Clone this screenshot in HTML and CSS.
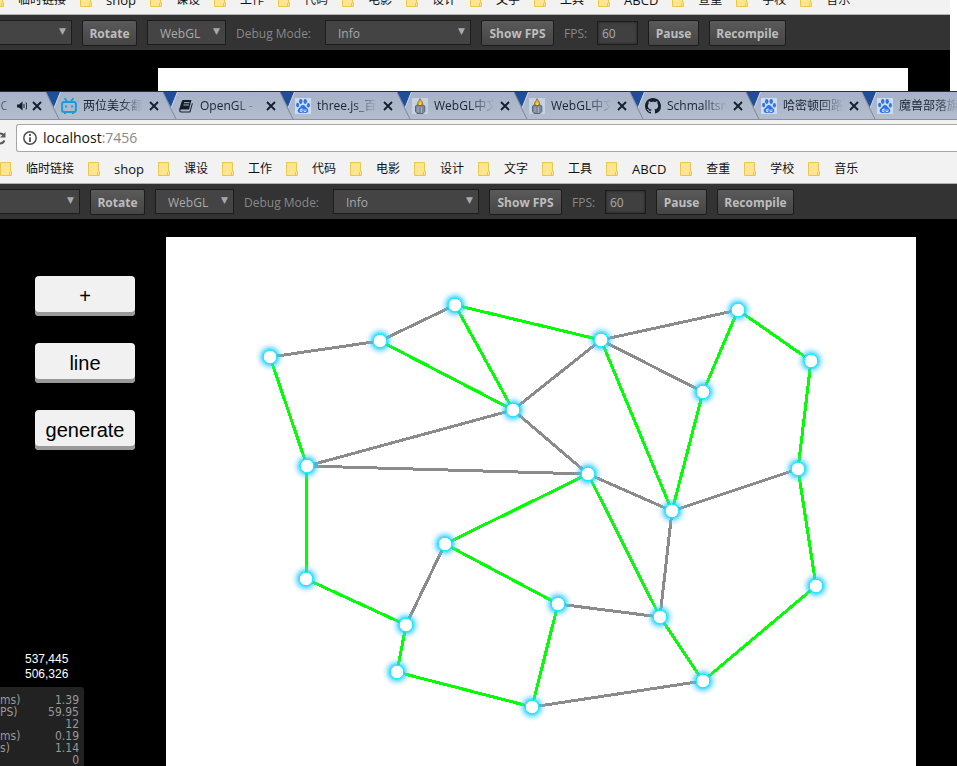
FILE: index.html
```
<!DOCTYPE html>
<html lang="zh">
<head>
<meta charset="utf-8">
<title>localhost:7456</title>
<link rel="stylesheet" href="styles.css">
</head>
<body>
<svg class="defs" aria-hidden="true">
  <symbol id="edge" viewBox="0 0 15 27"><path class="wedge" d="M0 0H14L8 15.500Z"/><path class="edge-light" d="M14.500 0L8 16"/><path class="edge-dark" d="M0 0L7.500 16L13 27"/></symbol>
  <symbol id="folder" viewBox="0 0 12 14"><path d="M.5.500H10.500V9.500H11.500V13.500H.5Z" fill="#ffe593" stroke="#edc64a"/><path d="M9.500 13V10" stroke="#edc64a"/></symbol>
  <symbol id="close" viewBox="0 0 10 10"><path d="M1 1L9 9M9 1L1 9" stroke="#131d2b" stroke-width="1.800"/></symbol>
  <symbol id="paw" viewBox="0 0 16 16"><rect width="16" height="16" fill="#cfdcf0"/><g fill="#2b74e8"><ellipse cx="5.700" cy="3.500" rx="1.700" ry="2.400"/><ellipse cx="10.200" cy="3.500" rx="1.700" ry="2.400"/><ellipse cx="2.600" cy="7" rx="1.500" ry="2.200"/><ellipse cx="13.400" cy="7.200" rx="1.500" ry="2.200"/><path d="M8 7C10 7 10.500 9 12 10.300C14.500 12.500 13 15.300 10.500 15C8.500 14.700 7.500 14.700 5.500 15C3 15.300 1.500 12.500 4 10.300C5.500 9 6 7 8 7Z"/></g><path d="M7 10.200V13.500H5.400V11.500H7M9 11.300V13.500H11V11.300" fill="none" stroke="#dce7f8" stroke-width=".9"/></symbol>
  <symbol id="lamp" viewBox="0 0 16 16"><rect width="16" height="16" fill="#c5d2e4"/><path d="M3.500 8L5 7H11L12.800 8V13.500L11 15.500H5L3.500 13.500Z" fill="#7d899b" stroke="#596577"/><path d="M6 9V14M9.500 9V15" stroke="#a5b0c0"/><path d="M5.500 7C5 4 7.500 3 8 .5C9 3 11.500 4 10.500 7Z" fill="#e7a823" stroke="#8b6231" stroke-width=".7"/><path d="M7 7C7 5 8 5 8.200 3.500C9.200 5 9.500 6 9 7Z" fill="#ffe023"/></symbol>
</svg>

<section class="window back">
  <nav class="bookmarks">
    <a href="#"><svg><use href="#folder"/></svg>临时链接</a>
    <a href="#" class="latin"><svg><use href="#folder"/></svg>shop</a>
    <a href="#"><svg><use href="#folder"/></svg>课设</a>
    <a href="#"><svg><use href="#folder"/></svg>工作</a>
    <a href="#"><svg><use href="#folder"/></svg>代码</a>
    <a href="#"><svg><use href="#folder"/></svg>电影</a>
    <a href="#"><svg><use href="#folder"/></svg>设计</a>
    <a href="#"><svg><use href="#folder"/></svg>文字</a>
    <a href="#"><svg><use href="#folder"/></svg>工具</a>
    <a href="#" class="latin"><svg><use href="#folder"/></svg>ABCD</a>
    <a href="#"><svg><use href="#folder"/></svg>查重</a>
    <a href="#"><svg><use href="#folder"/></svg>学校</a>
    <a href="#"><svg><use href="#folder"/></svg>音乐</a>
  </nav>
  <div class="toolbar">
    <span class="pick device"><select aria-label="Device"><option></option></select></span>
    <button class="rotate">Rotate</button>
    <span class="pick renderer"><select aria-label="Renderer"><option>WebGL</option></select></span>
    <label class="debug" for="debug-back">Debug Mode:</label>
    <span class="pick level"><select id="debug-back"><option>Info</option></select></span>
    <button class="show">Show FPS</button>
    <label class="fps" for="fps-back">FPS:</label>
    <input id="fps-back" value="60">
    <button class="pause">Pause</button>
    <button class="recompile">Recompile</button>
  </div>
  <div class="stage"><div class="side"></div><div class="canvas"></div></div>
</section>

<section class="window front">
  <div class="tabs">
    <div class="tab first"><span class="title">青C</span><svg class="sound" viewBox="0 0 10 10"><path d="M0 3.500H2L5.500.5V9.500L2 6.500H0Z" fill="#131d2b"/><path d="M7 3V7M9 1.500C10 4 10 6 9 8.500" fill="none" stroke="#131d2b"/></svg><button class="close" aria-label="Close"><svg><use href="#close"/></svg></button></div>
    <div class="tab"><svg class="edge"><use href="#edge"/></svg><svg class="icon" viewBox="0 0 16 16"><path d="M4 .8L6 3.300M12 .8L10 3.300" stroke="#179dda" stroke-width="1.800" stroke-linecap="round"/><rect x="1.100" y="4" width="13.800" height="10" rx="2" fill="none" stroke="#179dda" stroke-width="2"/><path d="M5 7.500V9.500M11 7.500V9.500M3 15.500H5M11 15.500H13" stroke="#179dda" stroke-width="1.800"/></svg><span class="title">两位美女翻</span><button class="close" aria-label="Close"><svg><use href="#close"/></svg></button></div>
    <div class="tab"><svg class="edge"><use href="#edge"/></svg><svg class="icon" viewBox="0 0 16 16"><path d="M5 2H13.500L11 11.500H3.500C2 11.500 1.800 13.500 3.500 13.500H11.500L14 5L14.800 5.500L12.300 14.500H3.500C1 14.500 1 12 1.500 10.500L3.500 4Q4 2 5 2Z" fill="#141c28"/><path d="M6 4.700H11.500M5.500 7H11" stroke="#a9b4c7"/></svg><span class="title">OpenGL -</span><button class="close" aria-label="Close"><svg><use href="#close"/></svg></button></div>
    <div class="tab"><svg class="edge"><use href="#edge"/></svg><svg class="icon"><use href="#paw"/></svg><span class="title">three.js_百</span><button class="close" aria-label="Close"><svg><use href="#close"/></svg></button></div>
    <div class="tab"><svg class="edge"><use href="#edge"/></svg><svg class="icon"><use href="#lamp"/></svg><span class="title">WebGL中文</span><button class="close" aria-label="Close"><svg><use href="#close"/></svg></button></div>
    <div class="tab"><svg class="edge"><use href="#edge"/></svg><svg class="icon"><use href="#lamp"/></svg><span class="title">WebGL中文</span><button class="close" aria-label="Close"><svg><use href="#close"/></svg></button></div>
    <div class="tab"><svg class="edge"><use href="#edge"/></svg><svg class="icon" viewBox="0 0 16 16"><path fill="#18202d" d="M8 0C3.580 0 0 3.580 0 8c0 3.540 2.290 6.530 5.470 7.590.4.070.55-.17.55-.38 0-.19-.01-.82-.01-1.490-2.010.37-2.530-.49-2.690-.94-.09-.23-.48-.94-.82-1.130-.28-.15-.68-.52-.01-.53.63-.01 1.080.58 1.230.82.72 1.210 1.870.87 2.330.66.070-.52.28-.87.510-1.070-1.780-.2-3.640-.89-3.640-3.950 0-.87.310-1.590.82-2.150-.08-.2-.36-1.020.08-2.120 0 0 .67-.21 2.200.82.640-.18 1.320-.27 2-.27s1.360.09 2 .27c1.530-1.040 2.200-.82 2.200-.82.440 1.100.16 1.920.08 2.120.51.560.82 1.270.82 2.150 0 3.070-1.870 3.750-3.650 3.950.29.250.54.730.54 1.480 0 1.070-.01 1.930-.01 2.200 0 .21.150.46.550.38A8.010 8.010 0 0 0 16 8c0-4.420-3.580-8-8-8Z"/></svg><span class="title">Schmalltsn</span><button class="close" aria-label="Close"><svg><use href="#close"/></svg></button></div>
    <div class="tab"><svg class="edge"><use href="#edge"/></svg><svg class="icon"><use href="#paw"/></svg><span class="title">哈密顿回路</span><button class="close" aria-label="Close"><svg><use href="#close"/></svg></button></div>
    <div class="tab"><svg class="edge"><use href="#edge"/></svg><svg class="icon"><use href="#paw"/></svg><span class="title">魔兽部落旗</span></div>
  </div>
  <div class="address">
    <svg class="reload" viewBox="0 0 6 16"><path d="M0 3.500Q3 3.500 4 6M0 13.500Q3 13.500 4.500 10.500" fill="none" stroke="#5a5a5a" stroke-width="2"/><path d="M5.500 2V7.500H0Z" fill="#5a5a5a"/></svg>
    <div class="url">
      <svg viewBox="0 0 14 14"><circle cx="7" cy="7" r="6.200" fill="none" stroke="#505050" stroke-width="1.500"/><path d="M7 3V5M7 6.200V11" stroke="#505050" stroke-width="1.800"/></svg>
      <span>localhost<span class="port">:7456</span></span>
    </div>
  </div>
  <nav class="bookmarks">
    <a href="#"><svg><use href="#folder"/></svg>临时链接</a>
    <a href="#" class="latin"><svg><use href="#folder"/></svg>shop</a>
    <a href="#"><svg><use href="#folder"/></svg>课设</a>
    <a href="#"><svg><use href="#folder"/></svg>工作</a>
    <a href="#"><svg><use href="#folder"/></svg>代码</a>
    <a href="#"><svg><use href="#folder"/></svg>电影</a>
    <a href="#"><svg><use href="#folder"/></svg>设计</a>
    <a href="#"><svg><use href="#folder"/></svg>文字</a>
    <a href="#"><svg><use href="#folder"/></svg>工具</a>
    <a href="#" class="latin"><svg><use href="#folder"/></svg>ABCD</a>
    <a href="#"><svg><use href="#folder"/></svg>查重</a>
    <a href="#"><svg><use href="#folder"/></svg>学校</a>
    <a href="#"><svg><use href="#folder"/></svg>音乐</a>
  </nav>
  <div class="toolbar">
    <span class="pick device"><select aria-label="Device"><option></option></select></span>
    <button class="rotate">Rotate</button>
    <span class="pick renderer"><select aria-label="Renderer"><option>WebGL</option></select></span>
    <label class="debug" for="debug">Debug Mode:</label>
    <span class="pick level"><select id="debug"><option>Info</option></select></span>
    <button class="show">Show FPS</button>
    <label class="fps" for="fps">FPS:</label>
    <input id="fps" value="60">
    <button class="pause">Pause</button>
    <button class="recompile">Recompile</button>
  </div>
  <main class="stage">
    <div class="side">
      <div class="actions">
        <button>+</button>
        <button>line</button>
        <button>generate</button>
      </div>
      <div class="coords">537,445<br>506,326</div>
      <table class="stats">
        <tr><th>ms)</th><td>1.39</td></tr>
        <tr><th>PS)</th><td>59.95</td></tr>
        <tr><th></th><td>12</td></tr>
        <tr><th>ms)</th><td>0.19</td></tr>
        <tr><th>s)</th><td>1.14</td></tr>
        <tr><th></th><td>0</td></tr>
      </table>
    </div>
    <div class="canvas">
      <svg class="graph" viewBox="166 237 750 529">
        <defs>
          <radialGradient id="glow"><stop offset=".4" stop-color="#10cfff" stop-opacity=".95"/><stop offset=".55" stop-color="#30ccff" stop-opacity=".65"/><stop offset=".75" stop-color="#5cd4ff" stop-opacity=".28"/><stop offset="1" stop-color="#9ae4ff" stop-opacity="0"/></radialGradient>
          <g id="node"><circle r="15" fill="url(#glow)"/><circle r="6.800" fill="#fff" stroke="#00f0ff"/></g>
        </defs>
        <path class="link" d="M270 357L380 341L455 305M513 410L307 466L588 474L513 410L601 340L738 310M601 340L703 392M588 474L672 511L798 469M672 511L660 617L558 604M445 544L406 625M532 707L703 681"/>
        <path class="route" d="M270 357L307 466L306 579L406 625L397 672L532 707L558 604L445 544L588 474L660 617L703 681L816 586L798 469L811 361L738 310L703 392L672 511L601 340L455 305L513 410L380 341"/>
        <use href="#node" x="270" y="357"/><use href="#node" x="380" y="341"/><use href="#node" x="455" y="305"/><use href="#node" x="601" y="340"/><use href="#node" x="738" y="310"/><use href="#node" x="811" y="361"/><use href="#node" x="703" y="392"/><use href="#node" x="513" y="410"/><use href="#node" x="307" y="466"/><use href="#node" x="588" y="474"/><use href="#node" x="672" y="511"/><use href="#node" x="798" y="469"/><use href="#node" x="445" y="544"/><use href="#node" x="306" y="579"/><use href="#node" x="406" y="625"/><use href="#node" x="397" y="672"/><use href="#node" x="532" y="707"/><use href="#node" x="558" y="604"/><use href="#node" x="660" y="617"/><use href="#node" x="703" y="681"/><use href="#node" x="816" y="586"/>
      </svg>
    </div>
  </main>
</section>
</body>
</html>
```
FILE: styles.css
```
* { box-sizing: border-box; }
body {
  margin: 0;
  height: 100vh;
  display: flex;
  flex-direction: column;
  overflow: hidden;
  background: #fff;
  font: 12px/16px "Open Sans", "Noto Sans CJK SC", sans-serif;
}
button, select, input { font: inherit; margin: 0; }
.defs { display: none; }
.window { display: flex; flex-direction: column; }
.back { flex: none; height: 91px; margin: 0 7px 0 -8px; overflow: hidden; }
.front { flex: 1; min-height: 0; }

.tabs {
  flex: none;
  height: 29px;
  display: flex;
  overflow: hidden;
  border-top: 1px solid #10336e;
  border-bottom: 1px solid #8a909c;
  background: linear-gradient(#a6b2c7, #b3bdce);
}
.tab { flex: 0 0 117px; display: flex; align-items: center; color: #1a2433; }
.tab:nth-child(n+6) { flex-basis: 116px; }
.tab.first { flex-basis: 46px; }
.tab .edge { flex: none; width: 15px; height: 27px; }
.wedge { fill: #1f4e9a; }
.edge-light { stroke: #c9d3e3; }
.edge-dark { fill: none; stroke: #7d8798; }
.tab .icon { flex: none; width: 16px; height: 16px; margin-right: 6px; }
.tab .title {
  flex: none;
  width: 60px;
  overflow: hidden;
  white-space: nowrap;
  -webkit-mask-image: linear-gradient(90deg, #000 60%, transparent);
  mask-image: linear-gradient(90deg, #000 60%, transparent);
}
.tab.first .title { width: 8px; margin-right: 9px; direction: rtl; opacity: .6; }
.sound { width: 10px; height: 10px; margin-right: 5px; }
.close { width: 10px; height: 10px; margin-left: 6px; padding: 0; border: 0; background: none; display: flex; }
.first .close { margin-left: 0; }
.close svg { width: 10px; height: 10px; }

.address { flex: none; display: flex; align-items: center; height: 34px; padding-top: 2px; background: #f2f2f2; }
.reload { width: 6px; height: 16px; margin-right: 10px; }
.url {
  flex: 1;
  height: 28px;
  display: flex;
  align-items: center;
  gap: 6px;
  padding-left: 6px;
  border: 1px solid #a6a6a6;
  border-right: 0;
  border-radius: 3px 0 0 3px;
  background: #fff;
  color: #111;
  font-size: 14px;
}
.url svg { width: 14px; height: 14px; }
.port { color: #888; }

.bookmarks {
  flex: none;
  display: flex;
  align-items: center;
  gap: 14px;
  height: 30px;
  padding-top: 1px;
  border-bottom: 1px solid #b0b4b0;
  background: #f2f2f2;
}
.back .bookmarks { margin-top: -15px; }
.bookmarks a { display: flex; align-items: center; gap: 14px; color: #111; text-decoration: none; white-space: nowrap; }
.bookmarks .latin { font-size: 13px; }
.bookmarks svg { width: 12px; height: 14px; }

.toolbar {
  flex: none;
  display: flex;
  align-items: center;
  gap: 10px;
  height: 35px;
  padding-top: 1px;
  background: #333;
  color: #888;
  white-space: nowrap;
}
.toolbar > * { flex: none; }
.toolbar label { padding-top: 2px; }
.toolbar button {
  height: 26px;
  padding: 2px 0 0;
  border: 1px solid #1c1c1c;
  border-radius: 2px;
  background: linear-gradient(#5a5a5a, #454545);
  color: #bdbdbd;
  font-weight: 700;
}
.pick { position: relative; height: 26px; }
.pick::after { content: "▼"; position: absolute; right: 6px; top: 4px; font: 9px/14px "DejaVu Sans", sans-serif; color: #aaa; pointer-events: none; }
.pick select {
  appearance: none;
  width: 100%;
  height: 25px;
  padding: 2px 12px 0;
  border: 1px solid #1c1c1c;
  border-radius: 0;
  background: #444;
  color: #aaa;
}
.toolbar input { width: 41px; height: 24px; padding: 0 4px; border: 1px solid #1c1c1c; background: #404040; box-shadow: inset 0 0 3px #222; color: #aaa; }
.device { width: 80px; }
.device select { border-left: 0; }
.rotate { width: 55px; }
.renderer { width: 79px; }
.debug { width: 79px; }
.level { width: 146px; }
.show { width: 73px; }
.fps { width: 23px; }
.pause { width: 51px; }
.recompile { width: 77px; }

.stage { flex: 1; min-height: 0; display: flex; background: #000; }
.side { flex: 0 0 166px; display: flex; flex-direction: column; align-items: flex-start; overflow: hidden; }
.canvas { flex: 1; margin: 18px 41px 0 0; background: #fff; overflow: hidden; }
.back .canvas { margin-right: 42px; }
.actions { display: flex; flex-direction: column; gap: 27px; margin: 57px 0 0 35px; }
.actions button {
  width: 100px;
  height: 40px;
  padding: 0 0 1px;
  border: 0;
  border-radius: 4px;
  background: #f1f1f1;
  box-shadow: inset 0 -4px #999;
  color: #000;
  font: 20px/24px "Liberation Sans", sans-serif;
}
.coords { margin: auto 0 5px 25px; color: #fff; font: 12px/15px "Liberation Sans", sans-serif; }
.stats {
  width: 84px;
  height: 78px;
  padding: 7px 5px 0 0;
  border-spacing: 0;
  border-radius: 0 3px 0 0;
  background: #222;
  color: #999;
  font: 12px/12px "DejaVu Sans Condensed", "DejaVu Sans", sans-serif;
}
.stats th, .stats td { height: 12px; padding: 0; font-weight: 400; text-align: left; }
.stats td { text-align: right; }
.graph { display: block; width: 100%; }
.link, .route { fill: none; stroke: #8b8b8b; stroke-width: 3; shape-rendering: crispEdges; }
.route { stroke: #0f0; }
```
